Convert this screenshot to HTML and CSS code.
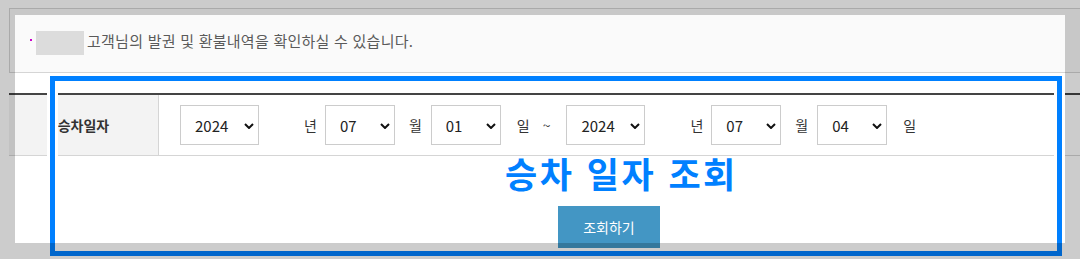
FILE: index.html
```html
<!DOCTYPE html>
<html lang="ko">
<head>
  <meta charset="UTF-8">
  <title>승차일자 조회</title>
  <link rel="stylesheet" href="styles.css">
</head>
<body>

  <div class="page">
    <div class="notice">
      <span class="dot"></span>
      <span class="masked"></span>
      <span class="notice-text">고객님의 발권 및 환불내역을 확인하실 수 있습니다.</span>
    </div>

    <table class="search-table">
      <tr>
        <th>승차일자</th>
        <td>
          <div class="date-range">
            <span class="sel sel-year">
              <select><option>2024</option></select>
              <svg class="chev" width="10" height="6" viewBox="0 0 10 6"><path d="M1 1l4 4 4-4" fill="none" stroke="#111" stroke-width="2"/></svg>
            </span>
            <span class="unit unit-y">년</span>
            <span class="sel">
              <select><option>07</option></select>
              <svg class="chev" width="10" height="6" viewBox="0 0 10 6"><path d="M1 1l4 4 4-4" fill="none" stroke="#111" stroke-width="2"/></svg>
            </span>
            <span class="unit unit-m">월</span>
            <span class="sel">
              <select><option>01</option></select>
              <svg class="chev" width="10" height="6" viewBox="0 0 10 6"><path d="M1 1l4 4 4-4" fill="none" stroke="#111" stroke-width="2"/></svg>
            </span>
            <span class="unit unit-d">일</span>
            <span class="tilde">~</span>
            <span class="sel sel-year">
              <select><option>2024</option></select>
              <svg class="chev" width="10" height="6" viewBox="0 0 10 6"><path d="M1 1l4 4 4-4" fill="none" stroke="#111" stroke-width="2"/></svg>
            </span>
            <span class="unit unit-y">년</span>
            <span class="sel">
              <select><option>07</option></select>
              <svg class="chev" width="10" height="6" viewBox="0 0 10 6"><path d="M1 1l4 4 4-4" fill="none" stroke="#111" stroke-width="2"/></svg>
            </span>
            <span class="unit unit-m">월</span>
            <span class="sel">
              <select><option>04</option></select>
              <svg class="chev" width="10" height="6" viewBox="0 0 10 6"><path d="M1 1l4 4 4-4" fill="none" stroke="#111" stroke-width="2"/></svg>
            </span>
            <span class="unit unit-d">일</span>
          </div>
        </td>
      </tr>
    </table>

    <div class="button-bar">
      <button class="search-btn">조회하기</button>
    </div>

    <!-- annotation frame + dimmed spotlight -->
    <div class="annotation">
      <span class="annotation-label">승차 일자 조회</span>
    </div>
    <div class="spotlight"></div>
  </div>

</body>
</html>
```

FILE: styles.css
```css
body {
  margin: 0;
  background-color: #fff;
  font-family: "Noto Sans CJK KR", "Noto Sans", sans-serif;
  color: #333;
}
.page {
  position: relative;
  width: 1080px;
  height: 259px;
  overflow: hidden;
}
.notice {
  display: flex;
  align-items: center;
  box-sizing: border-box;
  width: 1200px;
  height: 65px;
  margin: 8px 0 0 9px;
  padding-left: 20px;
  background-color: #fafafa;
  border: 1px solid #d5d5d5;
}
.dot {
  width: 2px;
  height: 2px;
  margin: -2px 4px 0 0;
  background-color: #c0c;
}
.masked {
  width: 48px;
  height: 24px;
  margin: 4px 3px 0 0;
  background-color: #dcdcdc;
}
.notice-text {
  font-size: 15px;
  letter-spacing: 0.25px;
  color: #5a5a5a;
}
.search-table {
  width: 1200px;
  margin: 20px 0 0 9px;
  border-collapse: separate;
  border-spacing: 0;
  border-top: 2px solid #444;
}
.search-table th {
  width: 149px;
  height: 60px;
  padding: 0;
  background-color: #f3f3f3;
  border-right: 1px solid #d5d5d5;
  border-bottom: 1px solid #d5d5d5;
  font-size: 14px;
  font-weight: bold;
  color: #333;
}
.search-table td {
  padding: 0 0 0 21px;
  border-bottom: 1px solid #d5d5d5;
}
.date-range {
  display: flex;
  align-items: center;
  font-size: 14px;
  color: #333;
}
.sel {
  position: relative;
  display: block;
  width: 70px;
  height: 40px;
}
.sel-year {
  width: 79px;
}
.sel select {
  appearance: none;
  -webkit-appearance: none;
  box-sizing: border-box;
  width: 100%;
  height: 100%;
  padding: 0 0 0 14px;
  border: 1px solid #ccc;
  border-radius: 0;
  background-color: #fff;
  font-family: "Noto Sans CJK KR", "Noto Sans", sans-serif;
  font-size: 15px;
  color: #222;
}
.chev {
  position: absolute;
  right: 5px;
  top: 18px;
  pointer-events: none;
}
.unit-y {
  margin: 0 8px 0 45px;
}
.unit-m {
  margin: 0 9px 0 14px;
}
.unit-d {
  margin-left: 16px;
}
.tilde {
  margin: 0 16px 0 13px;
}
.button-bar {
  padding: 50px 0 0 558px;
}
.search-btn {
  width: 102px;
  height: 42px;
  border: none;
  background-color: #4396c4;
  color: #fff;
  font-family: "Noto Sans CJK KR", "Noto Sans", sans-serif;
  font-size: 14px;
}
.annotation {
  position: absolute;
  left: 50px;
  top: 76px;
  box-sizing: border-box;
  width: 1012px;
  height: 180px;
  padding: 74px 0 0 450px;
  border: 5px solid #0080ff;
  box-shadow: 0 0 0 3px #fff, inset 0 0 0 3px #fff;
}
.annotation-label {
  display: block;
  font-size: 35px;
  font-weight: bold;
  line-height: 1;
  letter-spacing: 2.5px;
  color: #0080ff;
  white-space: nowrap;
}
.spotlight {
  position: absolute;
  left: 15px;
  top: 15px;
  width: 1050px;
  height: 228px;
  box-shadow: 0 0 0 1200px rgba(0,0,0,0.2);
  pointer-events: none;
}
```
